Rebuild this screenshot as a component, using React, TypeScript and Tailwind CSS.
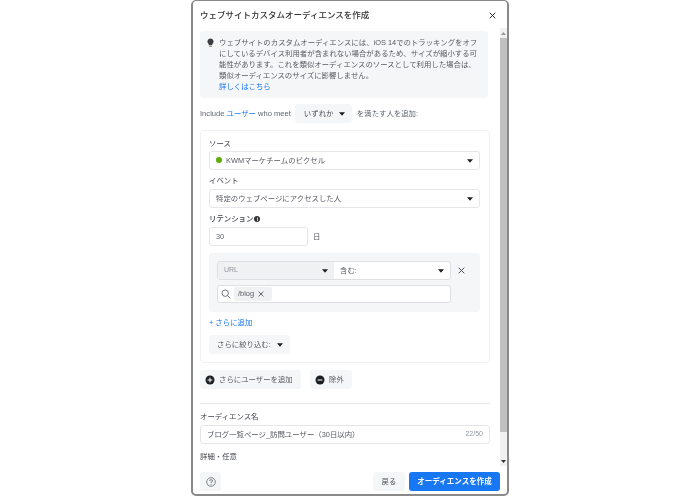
import React from "react";

const Caret = ({ className = "" }: { className?: string }) => (
  <svg width="6" height="4" viewBox="0 0 6 4" className={className}>
    <path d="M0 0.2 H6 L3 3.8 Z" fill="#1c1e21" />
  </svg>
);

const Cross = ({ size = 8, color = "#444950" }: { size?: number; color?: string }) => (
  <svg width={size} height={size} viewBox="0 0 8 8">
    <path d="M0.8 0.8 L7.2 7.2 M7.2 0.8 L0.8 7.2" stroke={color} strokeWidth="1.1" fill="none" />
  </svg>
);

const Label = ({ children }: { children: React.ReactNode }) => (
  <div className="text-[7.4px] leading-[12px] text-[#3f4349]">{children}</div>
);

const Select = ({ children }: { children: React.ReactNode }) => (
  <div className="h-[19px] flex items-center justify-between rounded-[3px] border border-[#e4e6e9] bg-white pl-[6px] pr-[6px] text-[7.4px] text-[#55595f]">
    {children}
  </div>
);

export default function App() {
  return (
    <div
      className="w-[700px] h-[497px] bg-white overflow-hidden flex justify-center blur-[0.3px]"
      style={{ fontFamily: '"Liberation Sans", "Noto Sans CJK JP", sans-serif' }}
    >
      <div className="w-[318px] h-[496px] border-2 border-t-[1px] border-[#8a8a8a] rounded-[5px] bg-white flex flex-col overflow-hidden">
        <div className="h-[27px] shrink-0 flex items-center justify-between pl-[7px] pr-[11px] pt-[1px]">
          <span className="text-[8.5px] font-medium text-[#333]">ウェブサイトカスタムオーディエンスを作成</span>
          <Cross size={7} color="#1c1e21" />
        </div>

        <div className="flex-1 min-h-0 flex">
          <div className="w-[300px] ml-[7px] overflow-hidden flex flex-col">
            <div className="w-[288px] mt-[3px] h-[67px] shrink-0 rounded-[3px] bg-[#f5f6f7] flex pl-[7px] pt-[6px]">
              <svg width="7" height="10" viewBox="0 0 7 10" className="mt-[1px] shrink-0">
                <path d="M3.5 0.5 A3 3 0 0 1 5.3 5.9 V7 H1.7 V5.9 A3 3 0 0 1 3.5 0.5 Z M2 7.7 H5 V8.6 H2 Z" fill="#3a3d42" />
              </svg>
              <div className="ml-[5px] w-[266px] text-[7.4px] leading-[11px] text-[#55595f] whitespace-nowrap">
                <div>
                  ウェブサイトのカスタムオーディエンスには、iOS 14でのトラッキングをオフ
                  <br />
                  にしているデバイス利用者が含まれない場合があるため、サイズが縮小する可
                  <br />
                  能性があります。これを類似オーディエンスのソースとして利用した場合は、
                  <br />
                  類似オーディエンスのサイズに影響しません。
                </div>
                <div className="text-[#1877f2]">詳しくはこちら</div>
              </div>
            </div>

            <div className="mt-[6px] h-[19px] shrink-0 flex items-center text-[7.6px] text-[#606770]">
              <span>Include</span>
              <span className="ml-[2px] text-[7.4px] text-[#1877f2]">ユーザー</span>
              <span className="ml-[2px]">who meet</span>
              <div className="ml-[4px] h-[19px] w-[57px] rounded-[3px] bg-[#f5f6f7] flex items-center justify-between pl-[9px] pr-[7px] text-[7.4px] text-[#444950]">
                いずれか
                <Caret />
              </div>
              <span className="ml-[5px] text-[7.4px]">を満たす人を追加:</span>
            </div>

            <div className="mt-[7px] w-[290px] h-[233px] shrink-0 rounded-[4px] border border-[#f0f1f3] pl-[8px] pr-[9px] pt-[7px] flex flex-col">
              <Label>ソース</Label>
              <div className="mt-[1px]">
                <Select>
                  <span className="flex items-center">
                    <span className="w-[6px] h-[6px] rounded-full bg-[#5cb000] mr-[4px]" />
                    KWMマーケチームのピクセル
                  </span>
                  <Caret />
                </Select>
              </div>
              <div className="mt-[5px]"><Label>イベント</Label></div>
              <div className="mt-[2px]">
                <Select>
                  特定のウェブページにアクセスした人
                  <Caret />
                </Select>
              </div>
              <div className="mt-[5px] flex items-center gap-[1px]">
                <span className="text-[7.4px] leading-[12px] font-medium text-[#3f4349]">リテンション</span>
                <span className="w-[6px] h-[6px] rounded-full bg-[#333] text-white text-[5px] leading-[6px] text-center font-bold">i</span>
              </div>
              <div className="mt-[2px] flex items-center">
                <div className="w-[99px] h-[19px] rounded-[3px] border border-[#e4e6e9] flex items-center pl-[6px] text-[7.4px] text-[#606770]">30</div>
                <span className="ml-[5px] text-[7.4px] text-[#55595f]">日</span>
              </div>

              <div className="mt-[7px] h-[59px] shrink-0 rounded-[3px] bg-[#f5f6f7] pl-[8px] pt-[8px]">
                <div className="flex items-center">
                  <div className="w-[234px] h-[19px] rounded-[3px] border border-[#dddfe2] bg-white flex overflow-hidden text-[7.4px]">
                    <div className="w-[116px] bg-[#f0f1f3] flex items-center justify-between pl-[6px] pr-[6px] text-[#90949c] text-[7px]">
                      URL
                      <Caret />
                    </div>
                    <div className="flex-1 flex items-center justify-between pl-[6px] pr-[6px] text-[#55595f]">
                      含む:
                      <Caret />
                    </div>
                  </div>
                  <span className="ml-[7px] flex"><Cross size={7} /></span>
                </div>
                <div className="mt-[5px] w-[234px] h-[18px] rounded-[3px] border border-[#dddfe2] bg-white flex items-center pl-[3px]">
                  <svg width="10" height="10" viewBox="0 0 10 10">
                    <circle cx="4.2" cy="4.2" r="3.2" stroke="#606770" strokeWidth="0.9" fill="none" />
                    <path d="M6.6 6.6 L9.3 9.3" stroke="#606770" strokeWidth="0.9" />
                  </svg>
                  <div className="ml-[3px] h-[14px] w-[38px] rounded-[2px] bg-[#f0f1f3] flex items-center pl-[4px] text-[7.4px] text-[#55595f]">
                    /blog
                    <span className="ml-[4px] flex"><Cross size={6} /></span>
                  </div>
                </div>
              </div>

              <div className="mt-[5px] text-[7.4px] leading-[12px] text-[#1877f2]">+ さらに追加</div>
              <div className="mt-[6px] w-[81px] h-[19px] rounded-[3px] bg-[#f5f6f7] flex items-center justify-between pl-[8px] pr-[7px] text-[7.4px] text-[#55595f] whitespace-nowrap">
                さらに絞り込む:
                <Caret />
              </div>
            </div>

            <div className="mt-[7px] flex gap-[9px] shrink-0">
              <div className="w-[101px] h-[19px] rounded-[3px] bg-[#f5f6f7] flex items-center pl-[5px] text-[7.4px] text-[#55595f]">
                <svg width="10" height="10" viewBox="0 0 10 10" className="mr-[4px]">
                  <circle cx="5" cy="5" r="4.5" fill="#1c1e21" />
                  <path d="M5 2.6 V7.4 M2.6 5 H7.4" stroke="#fff" strokeWidth="1" />
                </svg>
                さらにユーザーを追加
              </div>
              <div className="w-[42px] h-[19px] rounded-[3px] bg-[#f5f6f7] flex items-center pl-[5px] text-[7.4px] text-[#55595f]">
                <svg width="10" height="10" viewBox="0 0 10 10" className="mr-[4px]">
                  <circle cx="5" cy="5" r="4.5" fill="#1c1e21" />
                  <path d="M2.6 5 H7.4" stroke="#fff" strokeWidth="1" />
                </svg>
                除外
              </div>
            </div>

            <div className="mt-[14px] w-[290px] h-px bg-[#e4e6e9] shrink-0" />
            <div className="mt-[7px]"><Label>オーディエンス名</Label></div>
            <div className="mt-[2px] w-[290px] h-[19px] shrink-0 rounded-[3px] border border-[#e4e6e9] flex items-center justify-between pl-[6px] pr-[6px] text-[7.4px] text-[#55595f]">
              <span>ブログ一覧ページ_訪問ユーザー（30日以内）</span>
              <span className="text-[7px] text-[#90949c]">22/50</span>
            </div>
            <div className="mt-[7px]"><Label>詳細・任意</Label></div>
            <div className="mt-[3px] w-[290px] h-[20px] shrink-0 rounded-[3px] border border-[#e4e6e9]" />
          </div>

          <div className="w-[7px] bg-[#f1f1f1] flex flex-col">
            <div className="h-[10px] flex items-center justify-center">
              <svg width="5" height="3" viewBox="0 0 5 3"><path d="M0 3 H5 L2.5 0 Z" fill="#9a9a9a" /></svg>
            </div>
            <div className="h-[394px] bg-[#c1c1c1]" />
            <div className="flex-1 flex items-end justify-center pb-[3px]">
              <svg width="5" height="3" viewBox="0 0 5 3"><path d="M0 0 H5 L2.5 3 Z" fill="#333" /></svg>
            </div>
          </div>
        </div>

        <div className="h-[28px] pt-[3px] shrink-0 flex items-center justify-between pl-[7px] pr-[7px]">
          <div className="w-[21px] h-[19px] rounded-[3px] bg-[#f5f6f7] flex items-center justify-center">
            <svg width="10" height="10" viewBox="0 0 10 10">
              <circle cx="5" cy="5" r="4.3" stroke="#606770" strokeWidth="0.8" fill="none" />
              <path d="M3.6 4 A1.4 1.4 0 1 1 5 5.4 V6.1" stroke="#606770" strokeWidth="0.8" fill="none" />
              <circle cx="5" cy="7.4" r="0.5" fill="#606770" />
            </svg>
          </div>
          <div className="flex gap-[4px]">
            <div className="w-[32px] h-[19px] rounded-[3px] bg-[#f5f6f7] flex items-center justify-center text-[7.4px] text-[#444950]">戻る</div>
            <div className="w-[91px] h-[19px] rounded-[3px] bg-[#1877f2] flex items-center justify-center text-[7.5px] font-bold text-white">オーディエンスを作成</div>
          </div>
        </div>
      </div>
    </div>
  );
}
